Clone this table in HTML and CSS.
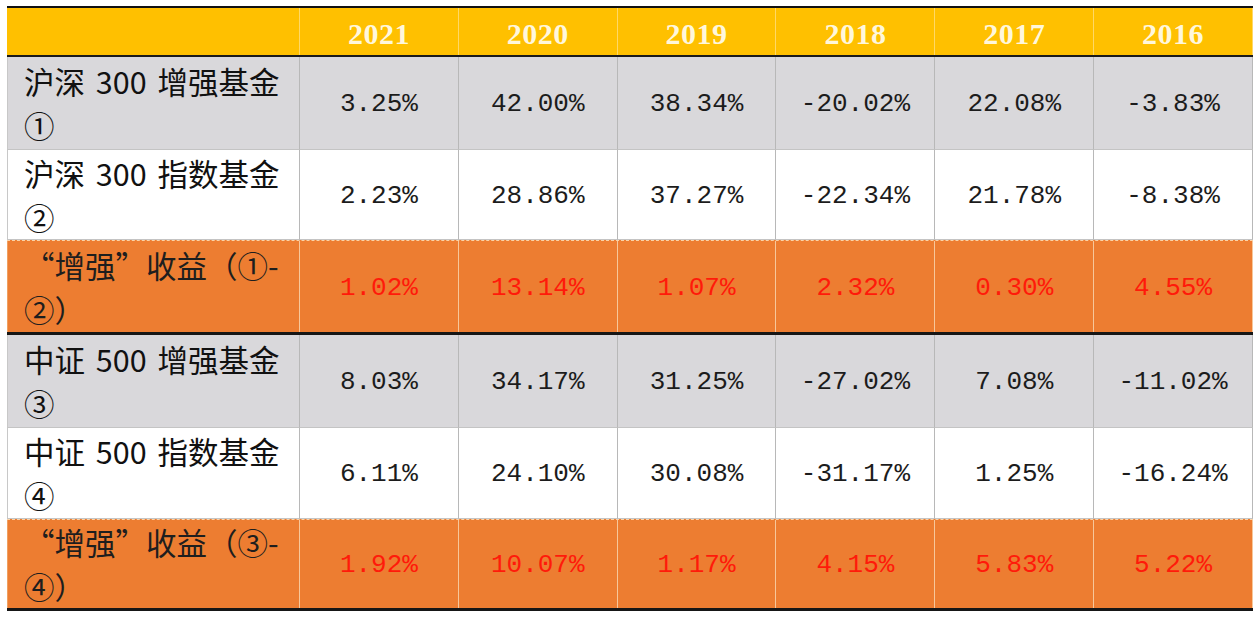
FILE: index.html
```html
<!DOCTYPE html>
<html lang="zh-CN">
<head>
<meta charset="utf-8">
<link rel="stylesheet" href="styles.css">
</head>
<body>
<div class="sheet">
  <div class="row head">
    <div class="cell label"></div>
    <div class="cell">2021</div>
    <div class="cell">2020</div>
    <div class="cell">2019</div>
    <div class="cell">2018</div>
    <div class="cell">2017</div>
    <div class="cell">2016</div>
  </div>
  <div class="row gray r1">
    <div class="cell label">沪深 300 增强基金<br>①</div>
    <div class="cell">3.25%</div>
    <div class="cell">42.00%</div>
    <div class="cell">38.34%</div>
    <div class="cell">-20.02%</div>
    <div class="cell">22.08%</div>
    <div class="cell">-3.83%</div>
  </div>
  <div class="row white r2">
    <div class="cell label">沪深 300 指数基金<br>②</div>
    <div class="cell">2.23%</div>
    <div class="cell">28.86%</div>
    <div class="cell">37.27%</div>
    <div class="cell">-22.34%</div>
    <div class="cell">21.78%</div>
    <div class="cell">-8.38%</div>
  </div>
  <div class="row orange r3">
    <div class="cell label">“增强”收益（①-<br>②）</div>
    <div class="cell">1.02%</div>
    <div class="cell">13.14%</div>
    <div class="cell">1.07%</div>
    <div class="cell">2.32%</div>
    <div class="cell">0.30%</div>
    <div class="cell">4.55%</div>
  </div>
  <div class="row gray r4">
    <div class="cell label">中证 500 增强基金<br>③</div>
    <div class="cell">8.03%</div>
    <div class="cell">34.17%</div>
    <div class="cell">31.25%</div>
    <div class="cell">-27.02%</div>
    <div class="cell">7.08%</div>
    <div class="cell">-11.02%</div>
  </div>
  <div class="row white r5">
    <div class="cell label">中证 500 指数基金<br>④</div>
    <div class="cell">6.11%</div>
    <div class="cell">24.10%</div>
    <div class="cell">30.08%</div>
    <div class="cell">-31.17%</div>
    <div class="cell">1.25%</div>
    <div class="cell">-16.24%</div>
  </div>
  <div class="row orange r6">
    <div class="cell label">“增强”收益（③-<br>④）</div>
    <div class="cell">1.92%</div>
    <div class="cell">10.07%</div>
    <div class="cell">1.17%</div>
    <div class="cell">4.15%</div>
    <div class="cell">5.83%</div>
    <div class="cell">5.22%</div>
  </div>
</div>
</body>
</html>
```

FILE: styles.css
```css
html, body {
  margin: 0;
  padding: 0;
  background: #ffffff;
}

.sheet {
  margin: 6px 0 0 7px;
  width: 1246px;
  border-top: 2px solid #111;
}

.row {
  display: grid;
  grid-template-columns: 293px repeat(6, 1fr);
  box-sizing: border-box;
}

.cell {
  display: flex;
  align-items: center;
  justify-content: center;
  box-sizing: border-box;
  border-right: 1px solid #b8b8b8;
  font-family: "Liberation Mono", "DejaVu Sans Mono", monospace;
  font-size: 26px;
  color: #1c1c1c;
  padding-top: 2px;
}

.cell.label {
  justify-content: flex-start;
  padding: 0 0 0 16px;
  font-family: "Noto Sans CJK SC", "Noto Sans", sans-serif;
  font-size: 30.5px;
  line-height: 44px;
  word-spacing: 4px;
  color: #111;
  border-left: 1px solid #c8c8c8;
}

.head {
  height: 49px;
  background: #ffc000;
  border-bottom: 2px solid #1a1a1a;
}

.head .cell {
  font-family: "Liberation Serif", "DejaVu Serif", serif;
  font-weight: bold;
  font-size: 30px;
  color: #fff7dc;
  letter-spacing: 0.5px;
  border-right: 1px solid #ffd866;
  padding-top: 4px;
}

.head .cell.label {
  border-left: none;
}

.gray {
  background: #d9d8db;
}

.white {
  background: #ffffff;
}

.gray .cell,
.white .cell {
  border-bottom: 1px solid #c4c4c4;
}

.orange {
  background: #ed7d31;
  border-top: 1px dashed #fbd3a8;
  border-bottom: 3px solid #161616;
}

.orange .cell {
  color: #ff1a0a;
  border-right: 1px solid #f7c79a;
}

.orange .cell.label {
  color: #1e1e1e;
  border-left: 1px solid #f0a060;
}

.r1 { height: 93px; }
.r2 { height: 90px; }
.r3 { height: 95px; }
.r4 { height: 93px; }
.r5 { height: 91px; }
.r6 { height: 92px; }
```
